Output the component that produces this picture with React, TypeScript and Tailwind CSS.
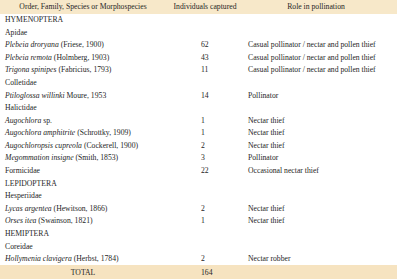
type Row = {
  name: React.ReactNode
  count?: string
  role?: string
}

const rows: Row[] = [
  { name: 'HYMENOPTERA' },
  { name: 'Apidae' },
  { name: <><i>Plebeia droryana</i> (Friese, 1900)</>, count: '62', role: 'Casual pollinator / nectar and pollen thief' },
  { name: <><i>Plebeia remota</i> (Holmberg, 1903)</>, count: '43', role: 'Casual pollinator / nectar and pollen thief' },
  { name: <><i>Trigona spinipes</i> (Fabricius, 1793)</>, count: '11', role: 'Casual pollinator / nectar and pollen thief' },
  { name: 'Colletidae' },
  { name: <><i>Ptiloglossa willinki</i> Moure, 1953</>, count: '14', role: 'Pollinator' },
  { name: 'Halictidae' },
  { name: <><i>Augochlora</i> sp.</>, count: '1', role: 'Nectar thief' },
  { name: <><i>Augochlora amphitrite</i> (Schrottky, 1909)</>, count: '1', role: 'Nectar thief' },
  { name: <><i>Augochloropsis cupreola</i> (Cockerell, 1900)</>, count: '2', role: 'Nectar thief' },
  { name: <><i>Megommation insigne</i> (Smith, 1853)</>, count: '3', role: 'Pollinator' },
  { name: 'Formicidae', count: '22', role: 'Occasional nectar thief' },
  { name: 'LEPIDOPTERA' },
  { name: 'Hesperiidae' },
  { name: <><i>Lycas argentea</i> (Hewitson, 1866)</>, count: '2', role: 'Nectar thief' },
  { name: <><i>Orses itea</i> (Swainson, 1821)</>, count: '1', role: 'Nectar thief' },
  { name: 'HEMIPTERA' },
  { name: 'Coreidae' },
  { name: <><i>Hollymenia clavigera</i> (Herbst, 1784)</>, count: '2', role: 'Nectar robber' },
]

export default function App() {
  return (
    <div className="h-[280px] w-[399px] overflow-hidden bg-white font-['Liberation_Serif',serif] text-[7.7px] leading-none text-[#262626]">
      <div className="w-[397px]">
        <div className="grid h-[13.5px] grid-cols-[166px_78px_144px_1fr] items-center bg-[#f7e8c9]">
          <div className="text-center">Order, Family, Species or Morphospecies</div>
          <div className="text-center">Individuals captured</div>
          <div className="text-center">Role in pollination</div>
          <div />
        </div>

        {rows.map((r, i) => (
          <div key={i} className="grid h-[12.6px] grid-cols-[166px_78px_1fr] items-center">
            <div className="pl-[5px] whitespace-nowrap">{r.name}</div>
            <div className="pl-[35px]">{r.count}</div>
            <div className="pl-[4px] whitespace-nowrap">{r.role}</div>
          </div>
        ))}

        <div className="grid h-[14px] grid-cols-[166px_78px_1fr] items-center bg-[#f6e3c0]">
          <div className="text-center">TOTAL</div>
          <div className="pl-[35px]">164</div>
          <div />
        </div>
      </div>
    </div>
  )
}
